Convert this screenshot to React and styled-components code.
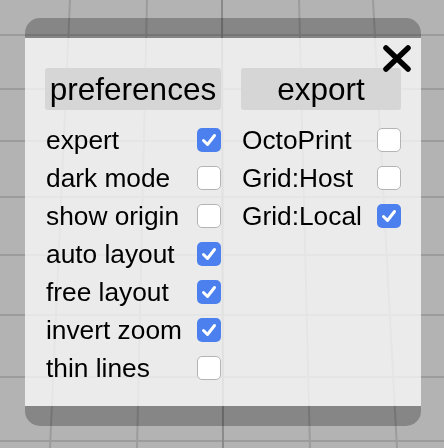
import React, { useState } from 'react';
import styled, { createGlobalStyle } from 'styled-components';

const GlobalStyle = createGlobalStyle`
  html, body {
    margin: 0;
    padding: 0;
    background: #b3b3b3;
    overflow: hidden;
  }
  body {
    font-family: "Liberation Sans", Arial, Helvetica, sans-serif;
  }
`;

const prefs = [
  { key: 'expert', label: 'expert', on: true },
  { key: 'dark', label: 'dark mode', on: false },
  { key: 'origin', label: 'show origin', on: false },
  { key: 'auto', label: 'auto layout', on: true },
  { key: 'free', label: 'free layout', on: true },
  { key: 'zoom', label: 'invert zoom', on: true },
  { key: 'thin', label: 'thin lines', on: false },
];

const exports = [
  { key: 'octo', label: 'OctoPrint', on: false },
  { key: 'host', label: 'Grid:Host', on: false },
  { key: 'local', label: 'Grid:Local', on: true },
];

// perspective floor grid behind the dialog
const hLines = [35, 89, 141, 197, 255, 315, 377, 441];
const vLines = [
  [70, 50],
  [147, 137],
  [299, 310],
  [373, 397],
];

const Grid = () => (
  <GridSvg width="444" height="448" viewBox="0 0 444 448">
    {hLines.map((y) => (
      <line key={y} x1="0" y1={y} x2="444" y2={y} stroke="#9c9c9c" strokeWidth="2" />
    ))}
    {vLines.map(([a, b]) => (
      <line key={a} x1={a} y1="0" x2={b} y2="448" stroke="#9c9c9c" strokeWidth="2" />
    ))}
    <line x1="222" y1="0" x2="223" y2="448" stroke="#8a8a8a" strokeWidth="2" />
  </GridSvg>
);

const CheckBox = ({ checked, onClick }) => (
  <Box checked={checked} onClick={onClick}>
    {checked && (
      <svg width="24" height="24" viewBox="0 0 24 24">
        <path d="M6.5 12.5 L10.5 16.5 L17.5 7.5" fill="none" stroke="#fff" strokeWidth="3"
          strokeLinecap="round" strokeLinejoin="round" />
      </svg>
    )}
  </Box>
);

const OptionList = ({ items }) => {
  const [state, setState] = useState(
    Object.fromEntries(items.map((i) => [i.key, i.on]))
  );
  return (
    <Rows>
      {items.map((item) => (
        <Row key={item.key}>
          <span>{item.label}</span>
          <CheckBox
            checked={state[item.key]}
            onClick={() => setState({ ...state, [item.key]: !state[item.key] })}
          />
        </Row>
      ))}
    </Rows>
  );
};

export default function App() {
  return (
    <>
      <GlobalStyle />
      <Grid />
      <Stage>
        <Dialog>
          <Bar />
          <Body>
            <CloseButton aria-label="close">
              <svg width="30" height="30" viewBox="0 0 30 30">
                <path d="M4 4 L26 25 M26 4 L4 25" stroke="#000" strokeWidth="5.5" strokeLinecap="round" />
              </svg>
            </CloseButton>
            <Columns>
              <Column>
                <Tab>preferences</Tab>
                <OptionList items={prefs} />
              </Column>
              <Column>
                <Tab>export</Tab>
                <OptionList items={exports} />
              </Column>
            </Columns>
          </Body>
          <Bar />
        </Dialog>
      </Stage>
    </>
  );
}

const GridSvg = styled.svg`
  position: fixed;
  left: 0;
  top: 0;
  z-index: 0;
`;

const Stage = styled.div`
  position: relative;
  z-index: 1;
  padding: 18px 0 0 25px;
`;

const Dialog = styled.div`
  width: 396px;
  display: flex;
  flex-direction: column;
  border-radius: 15px;
  overflow: hidden;
`;

const Bar = styled.div`
  height: 20px;
  background: rgba(0, 0, 0, 0.25);
`;

const Body = styled.div`
  position: relative;
  height: 368px;
  box-sizing: border-box;
  padding: 30px 20px 0 20px;
  background: rgba(255, 255, 255, 0.74);
`;

const CloseButton = styled.button`
  position: absolute;
  top: 6px;
  right: 9px;
  padding: 0;
  border: 0;
  background: transparent;
  cursor: pointer;
  line-height: 0;
`;

const Columns = styled.div`
  display: grid;
  grid-template-columns: 176px 160px;
  column-gap: 20px;
`;

const Column = styled.div`
  display: flex;
  flex-direction: column;
`;

const Tab = styled.div`
  height: 42px;
  border-radius: 3px;
  background: #d6d6d6;
  color: #000;
  font-size: 31.5px;
  line-height: 42px;
  text-align: center;
  margin-bottom: 11px;
`;

const Rows = styled.div`
  display: flex;
  flex-direction: column;
`;

const Row = styled.div`
  height: 38px;
  display: flex;
  align-items: center;
  justify-content: space-between;
  padding-left: 1px;
  font-size: 26.3px;
  color: #000;
`;

const Box = styled.div`
  width: 24px;
  height: 24px;
  box-sizing: border-box;
  border-radius: 5px;
  background: ${(p) => (p.checked ? '#4b80ee' : '#fff')};
  border: ${(p) => (p.checked ? 'none' : '1px solid #b4b4b4')};
  line-height: 0;
  cursor: pointer;
`;
